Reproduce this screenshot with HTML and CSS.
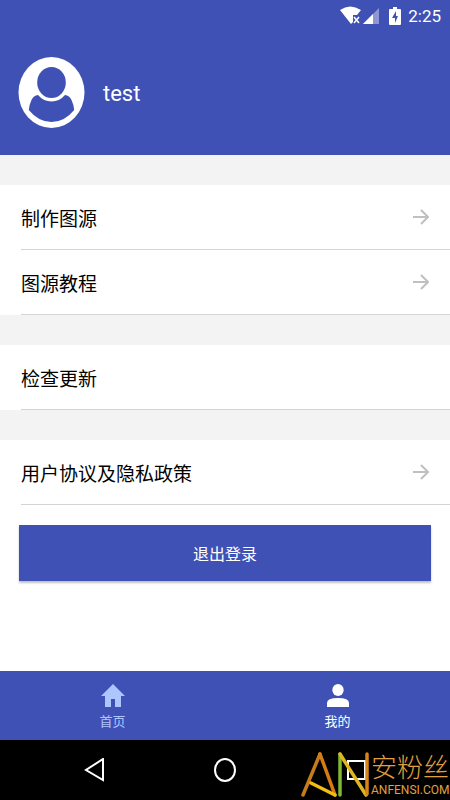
FILE: index.html
```html
<!DOCTYPE html>
<html lang="zh-CN">
<head>
<meta charset="utf-8">
<meta name="viewport" content="width=device-width, initial-scale=1">
<title>我的</title>
<link rel="stylesheet" href="styles.css">
</head>
<body>
<header class="header">
  <div class="status">
    <svg class="status-signal" viewBox="0 0 40 20" aria-hidden="true">
      <path d="M0 4Q10-3 21 4L17 9H13V16L11 18Z" fill="#fff"/>
      <path d="M14 11l5 6M19 11l-5 6" stroke="#fff" stroke-width="1.5"/>
      <path d="M23 18L39 2V18Z" fill="#8c97d3"/>
      <path d="M23 18L33 8V18Z" fill="#fff"/>
    </svg>
    <svg class="status-battery" viewBox="0 0 12 18" aria-hidden="true">
      <path d="M4 0H8V2H11Q12 2 12 3V17Q12 18 11 18H1Q0 18 0 17V3Q0 2 1 2H4Z" fill="#fff"/>
      <path d="M7 4L3 11H6V16L9 9H7Z" fill="#3f51b5"/>
    </svg>
    <span class="clock">2:25</span>
  </div>
  <div class="profile">
    <svg class="avatar" viewBox="0 0 66 71" aria-hidden="true">
      <ellipse cx="33" cy="35.5" rx="33" ry="35.5" fill="#fff"/>
      <ellipse cx="33" cy="25.5" rx="14.3" ry="15.5" fill="#3f51b5"/>
      <path d="M19.500 38Q15 38.500 13 43Q11 47 10.300 53Q20 65 33 65T55.700 53Q55 47 53 43Q51 38.500 46.500 38Q41 44.500 33 44.500T19.500 38Z" fill="#3f51b5"/>
    </svg>
    <span class="username">test</span>
  </div>
</header>
<main class="content">
  <section class="group">
    <a class="row" href="#make"><span class="row-body">制作图源<svg class="arrow" viewBox="0 0 16 16" aria-hidden="true"><path d="M0 8H15M8 1L15 8L8 15"/></svg></span></a>
    <a class="row" href="#guide"><span class="row-body">图源教程<svg class="arrow" viewBox="0 0 16 16" aria-hidden="true"><path d="M0 8H15M8 1L15 8L8 15"/></svg></span></a>
  </section>
  <section class="group">
    <a class="row" href="#update"><span class="row-body">检查更新</span></a>
  </section>
  <section class="group group-last">
    <a class="row" href="#policy"><span class="row-body">用户协议及隐私政策<svg class="arrow" viewBox="0 0 16 16" aria-hidden="true"><path d="M0 8H15M8 1L15 8L8 15"/></svg></span></a>
    <button class="logout" type="button">退出登录</button>
  </section>
</main>
<nav class="tabs">
  <a class="tab" href="#home">
    <svg class="tab-icon" viewBox="0 0 24 24" aria-hidden="true"><path d="M12 0L24 12H20V23H14V15H10V23H4V12H0Z" fill="currentColor"/></svg>
    首页
  </a>
  <a class="tab tab-active" href="#mine">
    <svg class="tab-icon" viewBox="0 0 24 24" aria-hidden="true"><ellipse cx="12" cy="6" rx="5.700" ry="6" fill="currentColor"/><path d="M1 23V19Q1 14 12 14T23 19V23Z" fill="currentColor"/></svg>
    我的
  </a>
</nav>
<footer class="system">
  <button class="key" type="button" aria-label="返回"><svg class="key-icon" viewBox="0 0 24 24" aria-hidden="true"><path d="M20 1V22L3 12Z"/></svg></button>
  <button class="key" type="button" aria-label="主屏幕"><svg class="key-icon" viewBox="0 0 24 24" aria-hidden="true"><ellipse cx="12" cy="12" rx="10" ry="11"/></svg></button>
  <button class="key" type="button" aria-label="最近任务"><svg class="key-icon" viewBox="0 0 24 24" aria-hidden="true"><path d="M4 3H21V21H4Z"/></svg></button>
  <div class="watermark">
    <svg class="mark" viewBox="0 0 70 48" aria-hidden="true">
      <g fill="none" stroke-width="3.500" stroke-linecap="round">
        <path d="M3 44L20 3" stroke="#c77c1b"/>
        <path d="M20 3L35 44" stroke="#d57c12"/>
        <path d="M11 32L35 44" stroke="#f3bd13"/>
        <path d="M40 44V3" stroke="#80b932"/>
        <path d="M40 3L66 44" stroke="#dfb520"/>
        <path d="M67 3V43" stroke="#d88418"/>
      </g>
    </svg>
    <div class="brand">
      <span class="brand-name">安粉丝</span>
      <span class="brand-site">ANFENSI.COM</span>
    </div>
  </div>
</footer>
</body>
</html>
```
FILE: styles.css
```css
* {
  box-sizing: border-box;
}

body {
  display: flex;
  flex-direction: column;
  min-height: 100vh;
  margin: 0;
  background: #f3f3f3;
  color: #000;
  font-family: Roboto, "Noto Sans CJK SC", sans-serif;
}

a {
  color: inherit;
  text-decoration: none;
}

button {
  padding: 0;
  border: 0;
  font: inherit;
}

.header {
  padding-bottom: 27px;
  background: #3f51b5;
  color: #fff;
}

.status {
  display: flex;
  align-items: center;
  justify-content: flex-end;
  height: 32px;
  padding-right: 9px;
}

.status-signal {
  width: 40px;
  height: 20px;
  margin-right: 9px;
}

.status-battery {
  width: 12px;
  height: 18px;
  margin-right: 7px;
}

.clock {
  font-size: 17px;
  line-height: 20px;
}

.profile {
  display: flex;
  align-items: center;
  gap: 18px;
  padding: 25px 18px 0;
}

.avatar {
  width: 67px;
  height: 71px;
}

.username {
  padding-top: 3px;
  font-size: 22px;
  line-height: 28px;
}

.content {
  display: flex;
  flex: 1;
  flex-direction: column;
  gap: 30px;
  padding-top: 30px;
}

.group {
  background: #fff;
}

.group-last {
  flex: 1;
}

.row {
  display: block;
  padding-left: 21px;
}

.row-body {
  display: flex;
  align-items: center;
  justify-content: space-between;
  height: 65px;
  padding-right: 21px;
  border-bottom: 1px solid #d4d4d4;
  font-size: 19px;
}

.arrow {
  width: 16px;
  height: 16px;
  fill: none;
  stroke: #c0c0c2;
  stroke-width: 2;
}

.logout {
  display: block;
  width: calc(100% - 38px);
  height: 56px;
  margin: 20px 19px;
  background: #3f51b5;
  box-shadow: 0 2px 2px rgba(0, 0, 0, 0.25);
  color: #fff;
  font-size: 16px;
}

.tabs {
  display: flex;
  height: 69px;
  background: #3f51b5;
  color: #adc6ff;
}

.tab {
  display: flex;
  flex: 1;
  flex-direction: column;
  align-items: center;
  gap: 5px;
  padding-top: 13px;
  font-size: 13px;
  line-height: 18px;
}

.tab-active {
  color: #fff;
}

.tab-icon {
  width: 24px;
  height: 24px;
}

.system {
  position: relative;
  display: flex;
  justify-content: center;
  height: 60px;
  background: #000;
}

.key {
  width: 29%;
  background: transparent;
}

.key-icon {
  display: block;
  width: 24px;
  height: 24px;
  margin: 0 auto;
  fill: none;
  stroke: #fff;
  stroke-width: 2;
}

.watermark {
  position: absolute;
  right: 0;
  bottom: 0;
  display: flex;
  align-items: center;
  gap: 1px;
  height: 50px;
  color: #e0a040;
}

.mark {
  width: 70px;
  height: 48px;
}

.brand {
  display: flex;
  flex-direction: column;
  width: 79px;
  white-space: nowrap;
}

.brand-name {
  font-size: 26px;
  font-weight: 300;
  line-height: 30px;
}

.brand-site {
  font-size: 12px;
  line-height: 14px;
}
```
